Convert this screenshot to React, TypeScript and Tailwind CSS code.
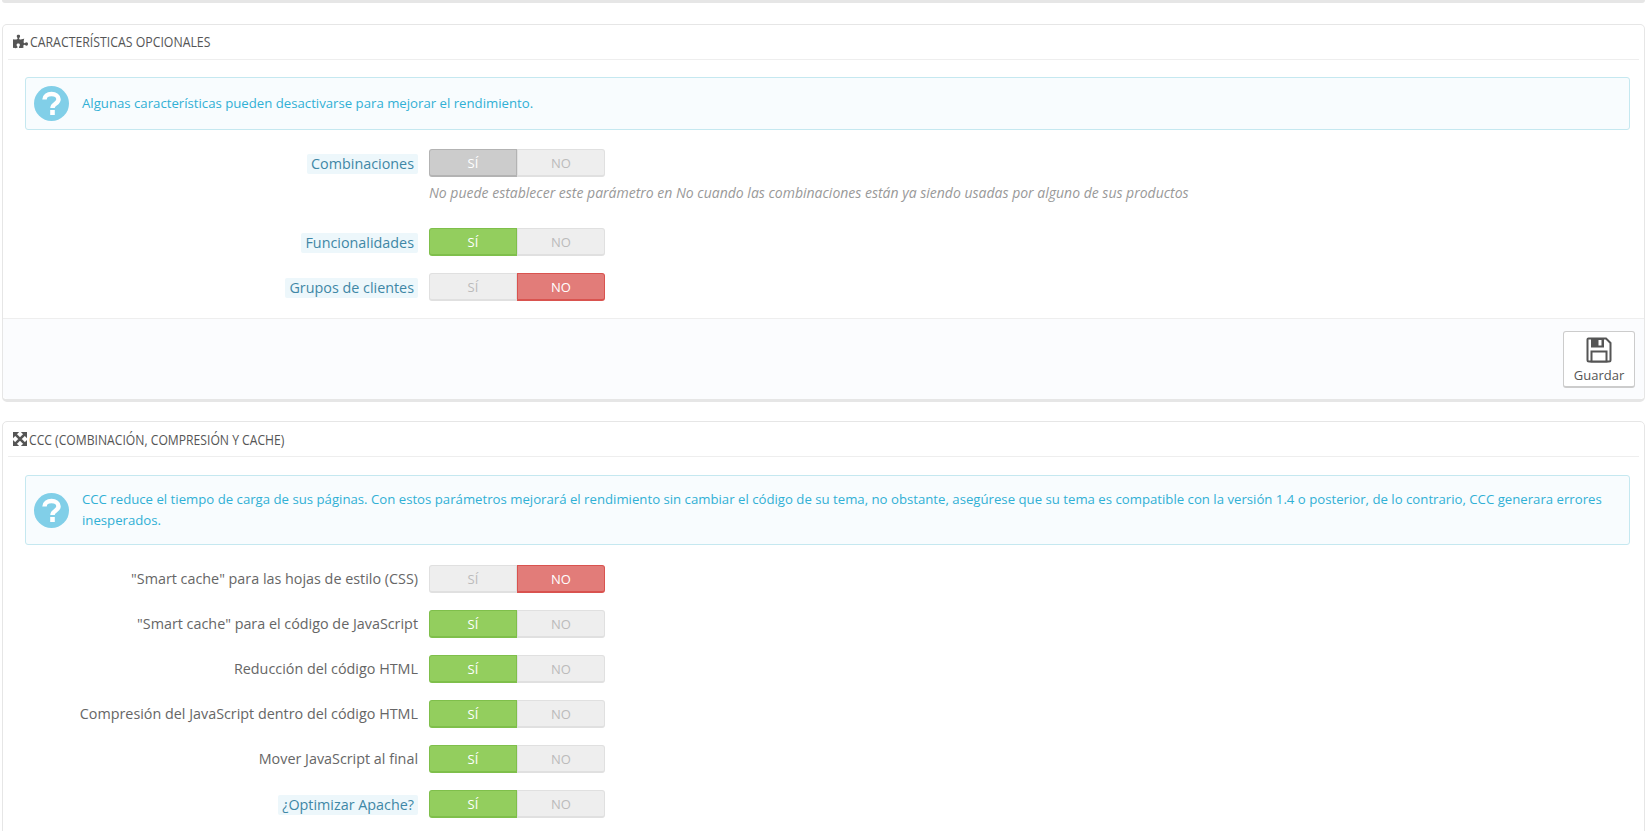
import { FaPuzzlePiece } from "react-icons/fa";
import type { ReactNode } from "react";

const QuestionIcon = () => (
  <svg viewBox="0 0 35 35" className="h-[35px] w-[35px] shrink-0">
    <circle cx="17.500" cy="17.500" r="17.500" fill="#81cfe8" />
    <path d="M10.500 13.500c0-3.500 3-5.500 7-5.500s7 2.200 7 5.300c0 4.700-6 4.200-6 8.700" fill="none" stroke="#ffffff" strokeWidth="4.500" />
    <rect x="16.200" y="24" width="4.600" height="5" fill="#ffffff" />
  </svg>
);

const SaveIcon = () => (
  <svg viewBox="0 0 26 26" className="h-[26px] w-[26px]">
    <path d="M2.500 1.500H20L24.500 6v17a1.500 1.500 0 0 1-1.500 1.500H3A1.500 1.500 0 0 1 1.500 23V2.500a1 1 0 0 1 1-1z" fill="#ffffff" stroke="#555555" strokeWidth="2" />
    <rect x="5" y="1" width="13" height="9.500" fill="#555555" />
    <rect x="12.500" y="3" width="3" height="5.500" fill="#ffffff" />
    <rect x="5.500" y="14.500" width="15" height="10" fill="#ffffff" stroke="#555555" strokeWidth="2" />
  </svg>
);

const ExpandIcon = () => (
  <svg viewBox="0 0 16 16" className="h-[14px] w-[14px] shrink-0" fill="#555555">
    <path d="M0 0h7L0 7zM16 0v7L9 0zM0 16V9l7 7zM16 16H9l7-7z" />
    <path d="M3 3l10 10M13 3L3 13" stroke="#555555" strokeWidth="3" />
  </svg>
);

type ToggleState = "on" | "off" | "disabled";

const Toggle = ({ state }: { state: ToggleState }) => (
  <div className="flex h-[28px] w-[176px] shrink-0 text-[13px] leading-[26px]">
    <span
      className={
        state === "on"
          ? "w-[88px] rounded-l-[3px] border border-b-2 border-[#7fbf4b] bg-[#93ce5e] text-center text-white"
          : state === "disabled"
            ? "w-[88px] rounded-l-[3px] border border-b-2 border-[#b3b3b3] bg-[#cccccc] text-center text-white"
            : "w-[88px] rounded-l-[3px] border border-b-2 border-[#e0e0e0] bg-[#eeeeee] text-center text-[#bbbbbb]"
      }
    >
      SÍ
    </span>
    <span
      className={
        state === "off"
          ? "w-[88px] rounded-r-[3px] border border-b-2 border-[#d9534f] bg-[#e27c79] text-center text-white"
          : "w-[88px] rounded-r-[3px] border border-b-2 border-[#e0e0e0] bg-[#eeeeee] text-center text-[#bbbbbb]"
      }
    >
      NO
    </span>
  </div>
);

const Row = ({ label, state, hint, mt }: { label: string; state: ToggleState; hint?: boolean; mt: string }) => (
  <div className={`flex items-start gap-[11px] ${mt}`}>
    {hint ? (
      <div className="flex h-[28px] w-[415px] shrink-0 items-center justify-end pt-[2px]">
        <span className="rounded-[2px] bg-[#edf7fb] px-[4px] text-[14.350px] leading-[20px] text-[#3f87a6]">{label}</span>
      </div>
    ) : (
      <div className="flex h-[28px] w-[415px] shrink-0 items-center justify-end">
        <span className="text-[14.350px] leading-[20px] text-[#666666]">{label}</span>
      </div>
    )}
    <Toggle state={state} />
  </div>
);

const Alert = ({ children, className }: { children: ReactNode; className: string }) => (
  <div className={`ml-[22px] mr-[14px] flex items-center gap-[13px] rounded-[3px] border border-[#c5e8f0] bg-[#f8fcfe] pl-[8px] pr-[16px] ${className}`}>
    {children}
  </div>
);

export default function App() {
  return (
    <div className="h-[831px] overflow-hidden bg-white pl-[2px] font-['Open_Sans',sans-serif] text-[#555555]">
      <div className="h-[3px] rounded-b-[3px] bg-[#e6e6e6]" />

      <section className="mt-[21px] rounded-[5px] border border-b-[3px] border-[#e6e6e6]">
        <h3 className="mx-[5px] flex h-[35px] items-center gap-[2px] border-b border-[#eeeeee] pb-[2px] pl-[5px] text-[15px] text-[#555555]">
          <FaPuzzlePiece className="h-[15px] w-[15px] shrink-0" />
          <span className="origin-left scale-x-[0.82] whitespace-nowrap">CARACTERÍSTICAS OPCIONALES</span>
        </h3>
        <Alert className="mt-[17px] h-[53px]">
          <QuestionIcon />
          <p className="text-[13.200px] text-[#31b0d5]">Algunas características pueden desactivarse para mejorar el rendimiento.</p>
        </Alert>
        <Row label="Combinaciones" state="disabled" hint mt="mt-[19px]" />
        <p className="ml-[426px] mt-[6px] text-[14px] italic leading-[20px] text-[#999999]">
          No puede establecer este parámetro en No cuando las combinaciones están ya siendo usadas por alguno de sus productos
        </p>
        <Row label="Funcionalidades" state="on" hint mt="mt-[25px]" />
        <Row label="Grupos de clientes" state="off" hint mt="mt-[17px]" />
        <footer className="mt-[17px] flex h-[81px] justify-end rounded-b-[5px] border-t border-[#eeeeee] bg-[#fbfcfe] pr-[9px] pt-[12px]">
          <button className="flex h-[57px] w-[72px] flex-col items-center rounded-[3px] border border-b-2 border-[#cccccc] bg-white pt-[5px] text-[13px] leading-[20px] text-[#555555]">
            <SaveIcon />
            <span className="mt-[2px]">Guardar</span>
          </button>
        </footer>
      </section>

      <section className="mt-[19px] rounded-t-[5px] border border-[#e6e6e6] pb-[40px]">
        <h3 className="mx-[5px] flex h-[35px] items-center gap-[2px] border-b border-[#eeeeee] pl-[5px] text-[15px] text-[#555555]">
          <ExpandIcon />
          <span className="origin-left scale-x-[0.81] whitespace-nowrap">CCC (COMBINACIÓN, COMPRESIÓN Y CACHE)</span>
        </h3>
        <Alert className="mt-[18px] h-[70px]">
          <QuestionIcon />
          <p className="text-[13.200px] leading-[21px] text-[#31b0d5]">
            CCC reduce el tiempo de carga de sus páginas. Con estos parámetros mejorará el rendimiento sin cambiar el código de su tema, no obstante, asegúrese que su tema es compatible con la versión 1.4 o posterior, de lo contrario, CCC generara errores inesperados.
          </p>
        </Alert>
        <Row label={'"Smart cache" para las hojas de estilo (CSS)'} state="off" mt="mt-[20px]" />
        <Row label={'"Smart cache" para el código de JavaScript'} state="on" mt="mt-[17px]" />
        <Row label="Reducción del código HTML" state="on" mt="mt-[17px]" />
        <Row label="Compresión del JavaScript dentro del código HTML" state="on" mt="mt-[17px]" />
        <Row label="Mover JavaScript al final" state="on" mt="mt-[17px]" />
        <Row label="¿Optimizar Apache?" state="on" hint mt="mt-[17px]" />
      </section>
    </div>
  );
}
